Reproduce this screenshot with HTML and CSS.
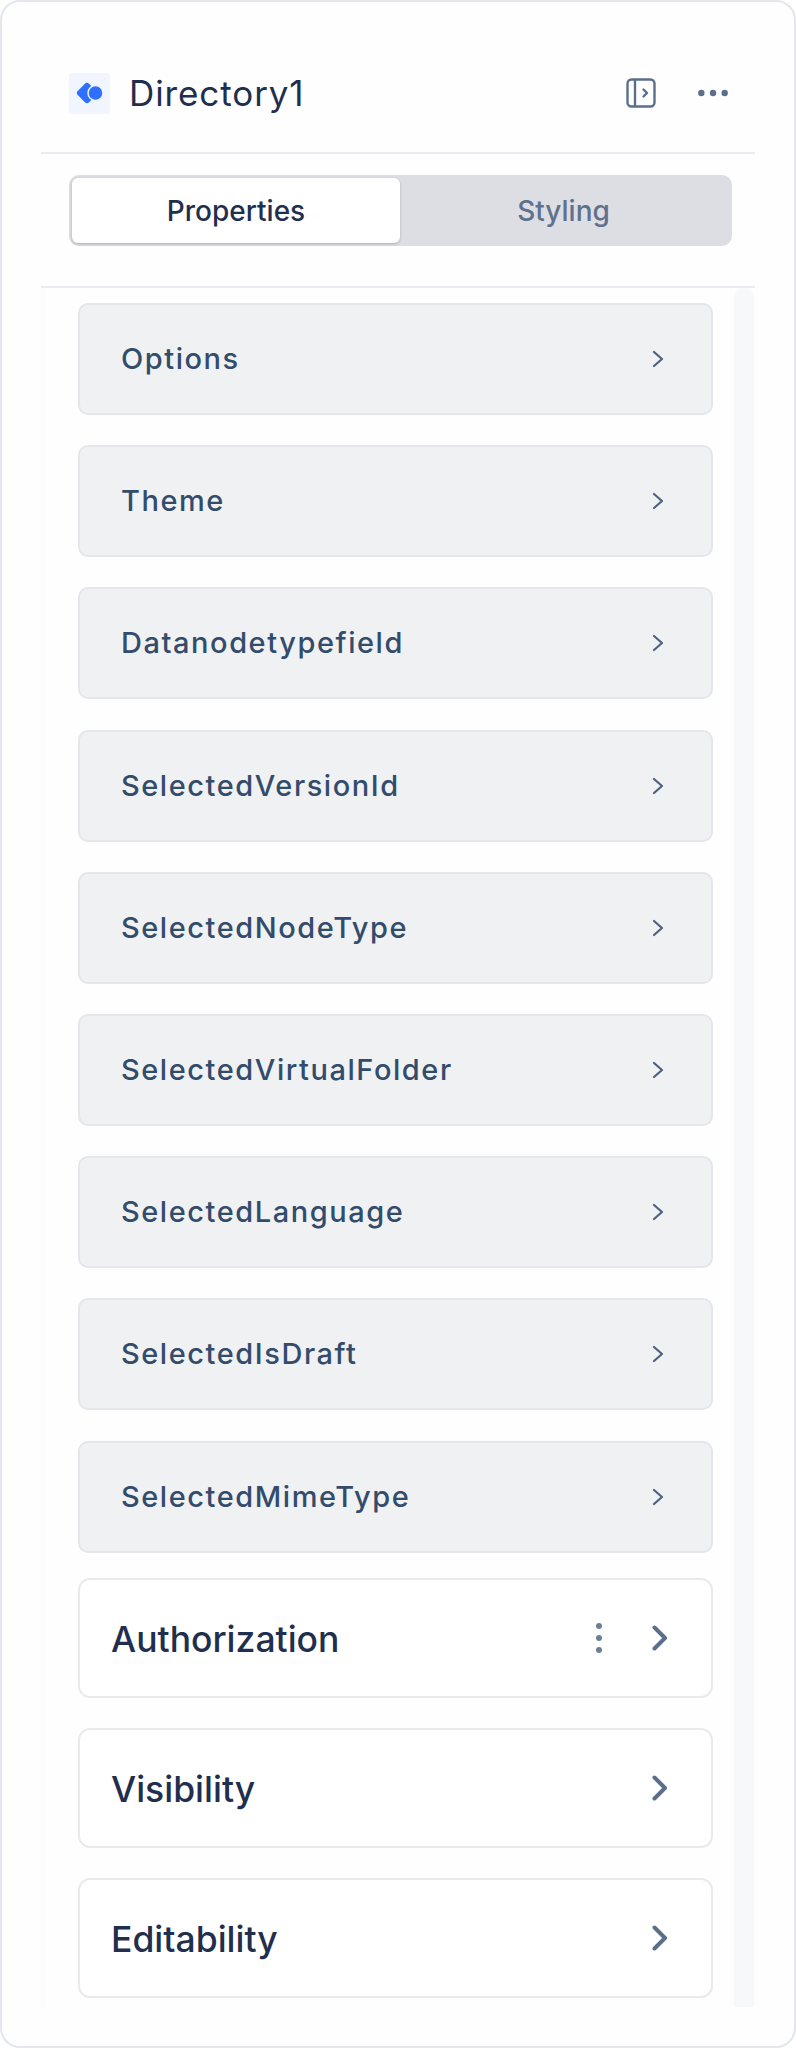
FILE: index.html
```html
<!DOCTYPE html>
<html lang="en">
<head>
    <meta charset="UTF-8">
    <meta name="viewport" content="width=device-width, initial-scale=1.0">
    <title>Directory1</title>
    <link rel="stylesheet" href="styles.css">
</head>
<body>
    <div class="panel">
        <div class="header">
            <div class="logo">
                <svg width="27" height="22" viewBox="0 0 27 22"><rect x="3" y="3" width="16" height="16" rx="3" transform="rotate(45 11 11)" fill="#2e6fff"/><circle cx="19.5" cy="11" r="7.5" fill="#2e6fff" stroke="#f0f5ff" stroke-width="1.5"/></svg>
            </div>
            <div class="title">Directory1</div>
            <button class="icon-btn sidebar-btn">
                <svg width="30" height="30" viewBox="0 0 30 30" fill="none" stroke="#5b6f8c" stroke-width="2.4"><rect x="1.5" y="1.5" width="27" height="27" rx="4"/><path d="M9 1.5V28.5"/><path d="M17.5 11.5L21 15L17.5 18.5" stroke-linecap="round" stroke-linejoin="round"/></svg>
            </button>
            <button class="icon-btn">
                <svg width="30" height="8" viewBox="0 0 30 8" fill="#5b6f8c"><circle cx="3.3" cy="4" r="3.2"/><circle cx="15" cy="4" r="3.2"/><circle cx="26.7" cy="4" r="3.2"/></svg>
            </button>
        </div>
        <div class="tabs-wrap">
            <div class="tabs">
                <div class="tab active">Properties</div>
                <div class="tab">Styling</div>
            </div>
        </div>
        <div class="body">
            <div class="list">
                <div class="row"><span>Options</span><svg class="chev-sm" viewBox="0 0 12 18"><path d="M2 2L10 9L2 16"/></svg></div>
                <div class="row"><span>Theme</span><svg class="chev-sm" viewBox="0 0 12 18"><path d="M2 2L10 9L2 16"/></svg></div>
                <div class="row"><span>Datanodetypefield</span><svg class="chev-sm" viewBox="0 0 12 18"><path d="M2 2L10 9L2 16"/></svg></div>
                <div class="row"><span>SelectedVersionId</span><svg class="chev-sm" viewBox="0 0 12 18"><path d="M2 2L10 9L2 16"/></svg></div>
                <div class="row"><span>SelectedNodeType</span><svg class="chev-sm" viewBox="0 0 12 18"><path d="M2 2L10 9L2 16"/></svg></div>
                <div class="row"><span>SelectedVirtualFolder</span><svg class="chev-sm" viewBox="0 0 12 18"><path d="M2 2L10 9L2 16"/></svg></div>
                <div class="row"><span>SelectedLanguage</span><svg class="chev-sm" viewBox="0 0 12 18"><path d="M2 2L10 9L2 16"/></svg></div>
                <div class="row"><span>SelectedIsDraft</span><svg class="chev-sm" viewBox="0 0 12 18"><path d="M2 2L10 9L2 16"/></svg></div>
                <div class="row"><span>SelectedMimeType</span><svg class="chev-sm" viewBox="0 0 12 18"><path d="M2 2L10 9L2 16"/></svg></div>
                <div class="section first">
                    <span>Authorization</span>
                    <svg class="kebab" width="8" height="30" viewBox="0 0 8 30" fill="#6c7f99"><circle cx="4" cy="3" r="3"/><circle cx="4" cy="15" r="3"/><circle cx="4" cy="27" r="3"/></svg>
                    <svg class="chev" viewBox="0 0 16 26"><path d="M2.5 2.5L13 13L2.5 23.5"/></svg>
                </div>
                <div class="section"><span>Visibility</span><svg class="chev" viewBox="0 0 16 26"><path d="M2.5 2.5L13 13L2.5 23.5"/></svg></div>
                <div class="section"><span>Editability</span><svg class="chev" viewBox="0 0 16 26"><path d="M2.5 2.5L13 13L2.5 23.5"/></svg></div>
            </div>
            <div class="scrollbar"></div>
        </div>
    </div>
</body>
</html>
```
FILE: styles.css
```css
* {
    box-sizing: border-box;
}

body {
    margin: 0;
    background: white;
    font-family: Inter, "Liberation Sans", sans-serif;
}

.panel {
    width: 796px;
    height: 2048px;
    background: #fefefe;
    border: 2px solid #e3e6eb;
    border-radius: 20px;
    padding: 0 39px;
}

.header {
    height: 152px;
    display: flex;
    align-items: center;
    padding: 32px 27px 0 28px;
    border-bottom: 2px solid #e9ebf0;
}

.logo {
    width: 41px;
    height: 41px;
    background: #f0f5ff;
    border-radius: 4px;
    display: flex;
    align-items: center;
    justify-content: center;
}

.title {
    flex: 1;
    margin-left: 19px;
    font-size: 35px;
    letter-spacing: 0.9px;
    color: #1f2f4d;
}

.icon-btn {
    border: none;
    background: none;
    padding: 0;
    display: flex;
}

.sidebar-btn {
    margin-right: 42px;
}

.tabs-wrap {
    height: 134px;
    padding: 21px 23px 0 28px;
    border-bottom: 2px solid #e9ebf0;
}

.tabs {
    height: 71px;
    background: #dcdee3;
    border-radius: 10px;
    padding: 3px 5px 3px 3px;
    display: flex;
}

.tab {
    flex: 1;
    display: flex;
    align-items: center;
    justify-content: center;
    font-size: 28px;
    font-weight: 500;
    color: #5f718c;
    border-radius: 6px;
}

.tab.active {
    flex: none;
    width: 328px;
    background: white;
    color: #1f2f4d;
    box-shadow: 0 1px 3px rgba(0, 0, 0, 0.22);
}

.body {
    display: flex;
    height: 1719px;
}

.list {
    width: 693px;
    padding: 15px 21px 0 32px;
    border-left: 5px solid #fcfcfd;
}

.row {
    height: 112px;
    margin-bottom: 30.2px;
    padding: 0 47px 0 41px;
    display: flex;
    align-items: center;
    justify-content: space-between;
    background: #f0f1f3;
    border: 2px solid #e4e6eb;
    border-radius: 10px;
    font-size: 29px;
    font-weight: 500;
    letter-spacing: 1.55px;
    color: #334c6c;
}

.row span {
    margin-top: -1px;
}

.chev-sm {
    width: 12px;
    height: 18px;
    fill: none;
    stroke: #4c617f;
    stroke-width: 2.2;
    stroke-linecap: round;
    stroke-linejoin: round;
}

.section {
    height: 120px;
    margin-bottom: 30px;
    padding: 0 43px 0 31px;
    display: flex;
    align-items: center;
    background: white;
    border: 2px solid #e8eaee;
    border-radius: 12px;
    font-size: 35.5px;
    font-weight: 500;
    color: #1f2f4d;
}

.section.first {
    margin-top: -5px;
}

.section span {
    flex: 1;
    padding-top: 3px;
}

.kebab {
    margin-right: 49px;
}

.chev {
    width: 16px;
    height: 26px;
    fill: none;
    stroke: #5b6f8c;
    stroke-width: 4;
    stroke-linecap: round;
    stroke-linejoin: round;
}

.scrollbar {
    width: 20px;
    background: #f7f8fa;
    border-radius: 10px 10px 0 0;
}
```
